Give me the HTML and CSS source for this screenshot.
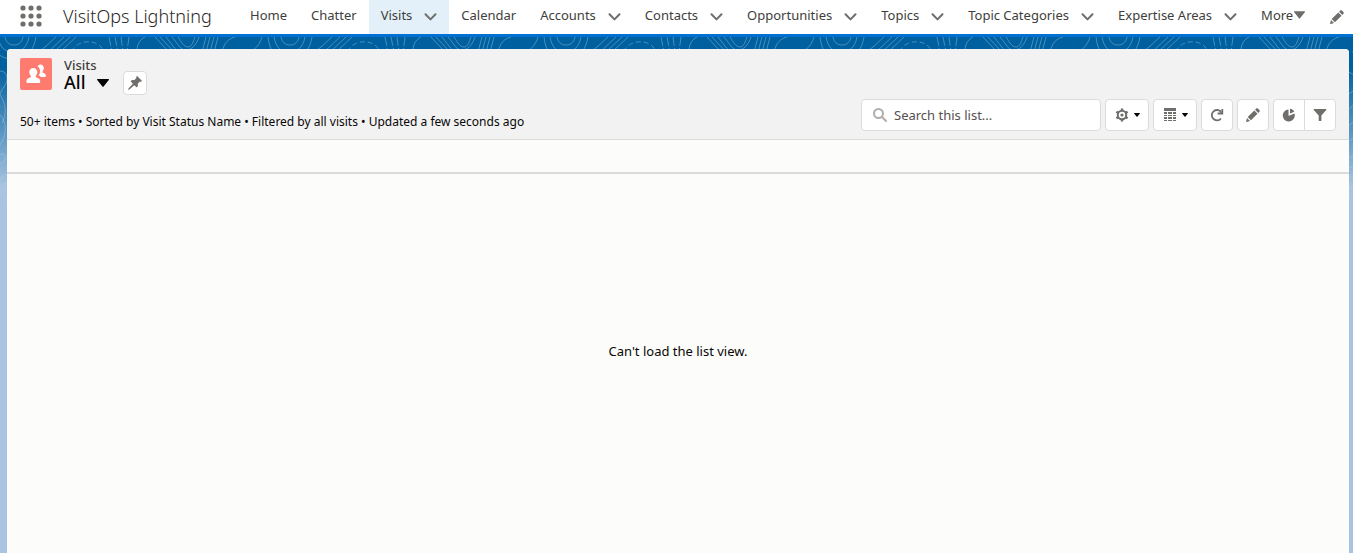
FILE: index.html
```html
<!DOCTYPE html>
<html lang="en">
<head>
    <meta charset="utf-8">
    <meta name="viewport" content="width=device-width, initial-scale=1">
    <title>Visits - VisitOps Lightning</title>
    <link rel="stylesheet" href="styles.css">
</head>
<body>
    <!-- shared symbols -->
    <svg class="symbols" aria-hidden="true">
        <symbol id="chevron" viewBox="0 0 12 8"><path d="M1 1.2 6 6.4 11 1.2" fill="none" stroke="currentColor" stroke-width="2" stroke-linecap="round" stroke-linejoin="round"/></symbol>
        <symbol id="caret" viewBox="0 0 12 8"><path d="M.6 0h10.8c.6 0 .8.6.4 1L6.6 7.6c-.3.4-.9.4-1.2 0L.2 1C-.2.6 0 0 .6 0z" fill="currentColor"/></symbol>
        <symbol id="pencil" viewBox="0 0 14 14"><path d="M10.2.6c.5-.5 1.2-.5 1.7 0l1.5 1.5c.5.5.5 1.2 0 1.700l-1.100 1.100-3.200-3.200zM8.300 2.500l3.200 3.200-6.600 6.600-3.200-3.200zM1 10l3 3-3.300 1c-.4.100-.7-.2-.6-.6z" fill="currentColor"/></symbol>
    </svg>

    <header class="global-nav">
        <button class="launcher" aria-label="App Launcher">
            <svg width="22" height="22" viewBox="0 0 22 22" fill="#706e6b">
                <circle cx="3" cy="3" r="2.6"/><circle cx="11" cy="3" r="2.6"/><circle cx="19" cy="3" r="2.6"/>
                <circle cx="3" cy="11" r="2.6"/><circle cx="11" cy="11" r="2.6"/><circle cx="19" cy="11" r="2.6"/>
                <circle cx="3" cy="19" r="2.6"/><circle cx="11" cy="19" r="2.6"/><circle cx="19" cy="19" r="2.6"/>
            </svg>
        </button>
        <span class="app-name">VisitOps Lightning</span>
        <nav class="tabs">
            <a class="tab" href="#">Home</a>
            <a class="tab" href="#">Chatter</a>
            <a class="tab active" href="#">Visits <svg class="chevron"><use href="#chevron"/></svg></a>
            <a class="tab" href="#">Calendar</a>
            <a class="tab" href="#">Accounts <svg class="chevron"><use href="#chevron"/></svg></a>
            <a class="tab" href="#">Contacts <svg class="chevron"><use href="#chevron"/></svg></a>
            <a class="tab" href="#">Opportunities <svg class="chevron"><use href="#chevron"/></svg></a>
            <a class="tab" href="#">Topics <svg class="chevron"><use href="#chevron"/></svg></a>
            <a class="tab" href="#">Topic Categories <svg class="chevron"><use href="#chevron"/></svg></a>
            <a class="tab" href="#">Expertise Areas <svg class="chevron"><use href="#chevron"/></svg></a>
            <button class="tab more">More<svg class="more-caret"><use href="#caret"/></svg></button>
        </nav>
        <button class="edit-nav" aria-label="Edit nav items"><svg width="14" height="14"><use href="#pencil"/></svg></button>
    </header>

    <main class="stage">
        <svg class="topo" aria-hidden="true">
            <defs>
                <pattern id="contours" width="276" height="176" patternUnits="userSpaceOnUse">
                    <g fill="none" stroke="#a8d4ec" stroke-opacity=".4">
                        <path d="M-8 0c2 16 8 22 22 22S34 12 36 0M-2 0c2 10 6 15 15 15s14-5 16-15M5 0c1 5 4 8 9 8s8-3 9-8"/>
                        <path d="M268 0c2 16 8 22 22 22M274 0c2 10 6 15 15 15"/>
                        <path d="M38 15c8-5 10-8 18-15M48 15 64 0M54 15 70 0M60 15 76 0"/>
                        <path d="M72 15C74 4 98-1 104 15" stroke-dasharray="5 3"/>
                        <path d="M109 0l3 15M115 0l3 15M121 0l2 15M129 0l-2 15" stroke-dasharray="9 2"/>
                        <path d="M137 15c0-7 2-12 8-15M155 0l14 15M160 0l14 15M166 0c8 10 10 15 16 15M172 0c7 8 8 13 14 13s10-5 13-13M178 0c4 6 6 10 10 10s5-5 7-10"/>
                        <path d="M206 0l-4 15M210 0l-4 15M214 0l-4 15M218 0l-4 15M222 15c2-9 6-13 13-15M262 0c-3 9-7 13-14 15"/>
                        <path d="M0 34c8 0 9 10 4 16s-6 14-4 20M0 58c6 8 7 20 2 28M0 78c8 8 6 22 0 30M0 118c7-5 7 10 0 8M0 142l8-6M0 150l8-6M0 158l8-7M0 166l8-8M0 174l8-8"/>
                        <path d="M240 34c12 2 16 10 10 18M240 60l14-9M240 76c12-8 16-20 36-24M240 92c10-6 18-18 36-22M240 108c12-10 20-14 36-18M240 124l36-20M240 132l36-10M240 140l36-4M240 150l36 4M240 160l36 8"/>
                    </g>
                </pattern>
            </defs>
            <rect width="100%" height="176" fill="url(#contours)"/>
        </svg>

        <section class="list-view">
            <div class="list-header">
                <div class="title-row">
                    <svg class="object-icon" viewBox="0 0 32 32" aria-hidden="true">
                        <rect width="32" height="32" rx="2" fill="#ff7b70"/>
                        <g fill="#fff">
                            <path d="M20.300 6.500c2 0 3.500 1.500 3.500 3.600 0 1.500-.6 2.400-1.200 3.200-.4.6-.3 1.100.4 1.500 1.600.7 3 1.300 3 3 0 .7-.4 1.100-1 1.100h-4.200c-.6-.8-1.500-1.200-2.200-1.600 1-1.200 1.500-2.600 1.500-4.100 0-2-.9-3.800-2.500-4.700.5-1.200 1.500-2 2.700-2z"/>
                            <path d="M13.300 10c2.300 0 4 1.700 4 4.100 0 1.600-.7 2.800-1.400 3.700-.5.700-.3 1.300.5 1.700 1.900.8 3.800 1.600 3.800 3.500v.7c0 .8-.5 1.300-1.200 1.300h-11.400c-.7 0-1.200-.5-1.200-1.300v-.7c0-1.900 1.900-2.700 3.800-3.500.8-.4 1-1 .5-1.700-.7-.9-1.400-2.100-1.400-3.700 0-2.400 1.700-4.100 4-4.100z"/>
                        </g>
                    </svg>
                    <div class="title">
                        <div class="object-name">Visits</div>
                        <h1 class="view-name">All</h1>
                    </div>
                    <button class="view-switch" aria-label="Select a List View"><svg width="12" height="8"><use href="#caret"/></svg></button>
                    <button class="icon-button pin" aria-label="Pin this list view">
                        <svg width="14" height="14" viewBox="0 0 14 14"><path d="M8.600.4c.3-.4.700-.4 1 0l4 4c.4.300.4.700 0 1-.5.5-1.200.5-1.700.2L9.700 7.800c.5 1.300.3 2.400-.5 3.200-.3.300-.6.300-.9 0L6.200 9.200 1.400 13.600.2 13.900l.3-1.300L4.900 7.800 3 5.700c-.3-.3-.3-.6 0-.9.8-.8 1.900-1 3.200-.5l2.200-2.200C8.100 1.600 8.100.9 8.600.4z" fill="currentColor"/></svg>
                    </button>
                </div>
                <div class="meta-row">
                    <p class="meta">50+ items • Sorted by Visit Status Name • Filtered by all visits • Updated a few seconds ago</p>
                    <div class="toolbar">
                        <label class="search">
                            <svg width="14" height="14" viewBox="0 0 14 14" aria-hidden="true"><circle cx="5.500" cy="5.500" r="4.500" fill="none" stroke="#b0adab" stroke-width="2"/><path d="m9 9 4 4" stroke="#b0adab" stroke-width="2" stroke-linecap="round"/></svg>
                            <input type="search" placeholder="Search this list..." aria-label="Search this list">
                        </label>
                        <button class="icon-button wide" aria-label="List View Controls">
                            <svg width="14" height="14" viewBox="0 0 14 14" fill="none" stroke="currentColor">
                                <circle cx="7" cy="7" r="4.200" stroke-width="2"/>
                                <circle cx="7" cy="7" r="1.600" fill="currentColor" stroke="none"/>
                                <path d="M7 .5v2.300M7 11.200v2.300M1.400 3.700l2 1.200M10.600 9.100l2 1.200M1.400 10.300l2-1.200M10.600 4.900l2-1.200" stroke-width="2.400"/>
                            </svg>
                            <svg class="small-caret"><use href="#caret"/></svg>
                        </button>
                        <button class="icon-button wide" aria-label="Display As">
                            <svg width="14" height="14" viewBox="0 0 14 14" fill="currentColor"><path d="M1 0h12v3H1zM1 4h3v2H1zM5 4h4v2H5zM10 4h3v2h-3zM1 7h3v1H1zM5 7h4v1H5zM10 7h3v1h-3zM1 9h3v2H1zM5 9h4v2H5zM10 9h3v2h-3zM1 12h3v1H1zM5 12h4v1H5zM10 12h3v1h-3z"/></svg>
                            <svg class="small-caret"><use href="#caret"/></svg>
                        </button>
                        <button class="icon-button" aria-label="Refresh">
                            <svg width="14" height="14" viewBox="0 0 14 14" fill="none" stroke="currentColor" stroke-width="1.800"><path d="M11.600 4.800A5.200 5.200 0 1 0 11 10.500"/><path d="M12.300 1v4.500H7.600"/></svg>
                        </button>
                        <button class="icon-button" aria-label="Edit List"><svg width="14" height="14"><use href="#pencil"/></svg></button>
                        <div class="button-group">
                            <button class="icon-button" aria-label="Show charts">
                                <svg width="14" height="14" viewBox="0 0 14 14" fill="currentColor"><path d="M6.500 1.500v5.800c0 .4.400.6.700.4l5.200-2.200A6 6 0 1 1 6.500 1.500z"/><path d="M8 .7c2 .2 3.500 1.300 4.200 3L8 5.600z"/></svg>
                            </button>
                            <button class="icon-button" aria-label="Show filters">
                                <svg width="14" height="14" viewBox="0 0 14 14" fill="currentColor"><path d="M1.200 1h11.600c.5 0 .7.600.4 1L8.400 7.400v5.200c0 .3-.2.500-.5.5H6.200c-.3 0-.5-.2-.5-.5V7.400L.8 2c-.3-.4-.1-1 .4-1z"/></svg>
                            </button>
                        </div>
                    </div>
                </div>
            </div>
            <div class="column-bar"></div>
            <div class="list-body">
                <p>Can't load the list view.</p>
            </div>
        </section>
    </main>
</body>
</html>
```
FILE: styles.css
```css
:root {
    --font: "Noto Sans", "Open Sans", sans-serif;
    --color-text: #080707;
    --color-weak: #3e3e3c;
    --color-icon: #706e6b;
    --color-border: #dddbda;
    --color-brand: #0070d2;
}

* {
    box-sizing: border-box;
}

body {
    display: flex;
    flex-direction: column;
    min-height: 100vh;
    margin: 0;
    font: 13px/20px var(--font);
    color: var(--color-text);
}

button {
    padding: 0;
    border: 0;
    background: none;
    font: inherit;
    color: var(--color-icon);
}

svg {
    display: block;
    flex: none;
}

p,
h1 {
    margin: 0;
}

.symbols {
    position: absolute;
    width: 0;
    height: 0;
}

/* navigation bar */
.global-nav {
    display: flex;
    align-items: center;
    height: 37px;
    padding-left: 20px;
    border-bottom: 3px solid var(--color-brand);
    background: #fff;
}

.launcher {
    margin-right: 21px;
    margin-bottom: 3px;
}

.app-name {
    width: 175px;
    padding-bottom: 2px;
    font-size: 18px;
    font-weight: 300;
    white-space: nowrap;
    color: #2b2826;
}

.tabs {
    display: flex;
    align-self: stretch;
}

.tab {
    display: flex;
    align-items: center;
    gap: 12px;
    padding: 0 12px 4px;
    text-decoration: none;
    white-space: nowrap;
    color: var(--color-weak);
}

.tab.active {
    background: #e3f0fa;
}

.tab.more {
    gap: 1px;
}

.chevron {
    width: 13px;
    height: 8px;
    margin-top: 4px;
    color: var(--color-icon);
}

.more-caret {
    width: 11px;
    height: 8px;
    color: var(--color-icon);
}

.edit-nav {
    margin-left: auto;
    margin-right: 9px;
}

/* patterned backdrop */
.stage {
    position: relative;
    display: flex;
    flex: 1;
    padding: 12px 4px 0 7px;
    background: #a9c4e0 linear-gradient(#005f9e 0, #005f9e 30px, #a9c4e0 150px) no-repeat;
}

.topo {
    position: absolute;
    inset: 0;
    width: 100%;
    height: 176px;
}

.list-view {
    position: relative;
    display: flex;
    flex: 1;
    flex-direction: column;
    border-radius: 4px 4px 0 0;
    background: #fcfcfa;
}

.list-header {
    padding: 9px 13px 8px;
    border-bottom: 1px solid var(--color-border);
    border-radius: 4px 4px 0 0;
    background: #f3f2f2;
}

.title-row {
    display: flex;
    height: 41px;
}

.object-icon {
    width: 32px;
    height: 32px;
    margin-right: 12px;
}

.title {
    min-width: 32px;
}

.object-name {
    line-height: 14px;
    color: var(--color-weak);
    font-weight: 500;
}

.view-name {
    font-size: 18px;
    font-weight: 500;
    line-height: 20px;
}

.view-switch {
    align-self: flex-start;
    margin: 21px 14px 0 0;
    color: var(--color-text);
}

.meta-row {
    display: flex;
    justify-content: space-between;
}

.meta {
    padding-top: 13px;
    font-size: 12px;
    line-height: 19px;
}

.toolbar {
    display: flex;
    gap: 4px;
}

.icon-button {
    display: flex;
    align-items: center;
    justify-content: center;
    width: 32px;
    height: 32px;
    border: 1px solid var(--color-border);
    border-radius: 4px;
    background: #fff;
}

.icon-button.wide {
    gap: 5px;
    width: 44px;
}

.icon-button.pin {
    width: 24px;
    height: 24px;
    margin-top: 13px;
}

.small-caret {
    width: 6px;
    height: 4px;
    color: var(--color-text);
}

.button-group {
    display: flex;
}

.button-group .icon-button:first-child {
    border-radius: 4px 0 0 4px;
}

.button-group .icon-button:last-child {
    margin-left: -1px;
    border-radius: 0 4px 4px 0;
}

.search {
    display: flex;
    align-items: center;
    gap: 7px;
    width: 240px;
    height: 32px;
    padding: 0 11px;
    border: 1px solid var(--color-border);
    border-radius: 4px;
    background: #fff;
}

.search input {
    flex: 1;
    min-width: 0;
    padding: 0;
    border: 0;
    outline: 0;
    background: none;
    font: inherit;
}

.search input::placeholder {
    color: #54514f;
}

.column-bar {
    height: 34px;
    border-bottom: 2px solid var(--color-border);
}

.list-body {
    display: flex;
    flex: 1;
    align-items: center;
    justify-content: center;
    padding-bottom: 26px;
}
```
